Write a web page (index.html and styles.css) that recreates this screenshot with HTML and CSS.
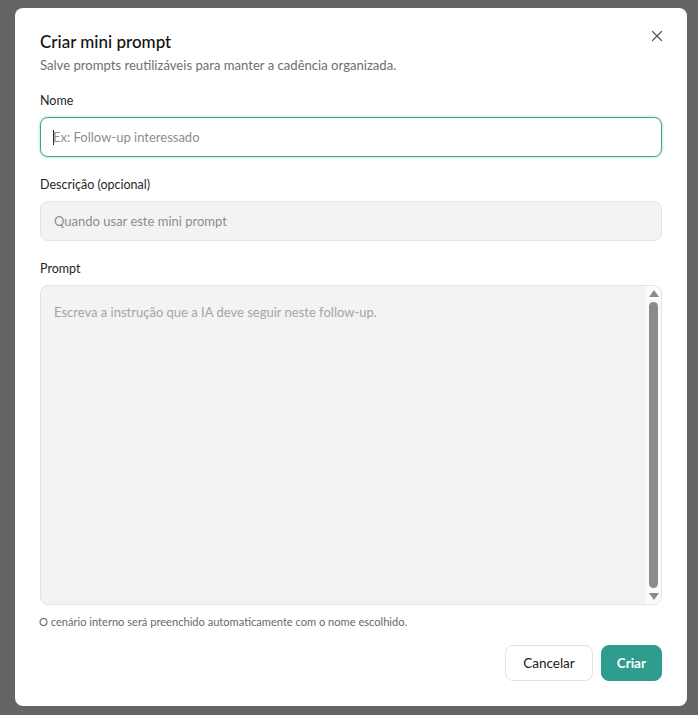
FILE: index.html
```html
<!DOCTYPE html>
<html lang="pt-BR">
<head>
<meta charset="utf-8">
<link rel="stylesheet" href="styles.css">
</head>
<body>
<div class="overlay">
  <div class="modal">
    <button class="close" aria-label="Fechar">
      <svg width="12" height="12" viewBox="0 0 12 12"><path d="M1.5 1.5L10.5 10.5M10.5 1.5L1.5 10.5" stroke="#555" stroke-width="1.2" fill="none" stroke-linecap="round"/></svg>
    </button>
    <h2 class="title">Criar mini prompt</h2>
    <p class="subtitle">Salve prompts reutilizáveis para manter a cadência organizada.</p>

    <div class="field">
      <label class="label">Nome</label>
      <div class="input focused"><span class="caret"></span><span class="ph">Ex: Follow-up interessado</span></div>
    </div>
    <div class="field">
      <label class="label">Descrição (opcional)</label>
      <div class="input"><span class="ph">Quando usar este mini prompt</span></div>
    </div>
    <div class="field">
      <label class="label">Prompt</label>
      <div class="textarea">
        <div class="ta-inner"><span class="ph">Escreva a instrução que a IA deve seguir neste follow-up.</span></div>
        <div class="scrollbar" aria-hidden="true">
          <span class="arrow up"></span>
          <span class="thumb"></span>
          <span class="arrow down"></span>
        </div>
      </div>
    </div>
    <p class="hint">O cenário interno será preenchido automaticamente com o nome escolhido.</p>

    <div class="actions">
      <button class="btn secondary">Cancelar</button>
      <button class="btn primary">Criar</button>
    </div>
  </div>
</div>
</body>
</html>
```
FILE: styles.css
```css
* { box-sizing: border-box; }
html, body { margin: 0; padding: 0; height: 100%; }
body {
  background: #656565;
  font-family: "Lato", "Liberation Sans", sans-serif;
  color: #1a1a1a;
}
.overlay {
  padding: 8px 11px 9px 15px;
  height: 715px;
}
.modal {
  position: relative;
  background: #fff;
  border-radius: 8px;
  height: 698px;
  padding: 23px 25px 25px 25px;
  display: flex;
  flex-direction: column;
}
.close {
  position: absolute;
  top: 20px;
  right: 22px;
  width: 16px;
  height: 16px;
  border: 0;
  background: none;
  padding: 2px;
  display: flex;
}
.title {
  margin: 0;
  font-size: 17px;
  font-weight: 500;
  line-height: 22px;
  color: #111;
}
.subtitle {
  margin: 3px 0 0 0;
  font-size: 13.1px;
  line-height: 18px;
  color: #6f6f6f;
}
.field { margin-top: 19px; display: flex; flex-direction: column; }
.field + .field { margin-top: 20px; }
.label {
  font-size: 12.5px;
  line-height: 16px;
  color: #1f1f1f;
  margin-bottom: 8px;
}
.input {
  height: 40px;
  border: 1px solid #e4e4e4;
  background: #f3f3f3;
  border-radius: 8px;
  display: flex;
  align-items: center;
  padding: 0 13px;
  font-size: 13px;
}
.input.focused {
  background: #fff;
  border: 1.5px solid #3aa597;
  box-shadow: 0 0 0 1.5px rgba(58,165,151,0.18);
  padding-left: 12px;
}
.caret {
  width: 1px; height: 15px; background: #222; margin-right: -1px;
}
.ph { color: #8d8d8d; font-size: 13px; }
.textarea {
  height: 320px;
  border: 1px solid #e4e4e4;
  background: #f3f3f3;
  border-radius: 8px;
  display: flex;
  overflow: hidden;
  font-size: 13px;
}
.ta-inner {
  flex: 1;
  padding: 18px 13px;
}
.ta-inner .ph { color: #a5a5a5; }
.scrollbar {
  width: 15px;
  background: #fbfbfb;
  display: flex;
  flex-direction: column;
  align-items: center;
  padding: 4px 0 4px;
}
.arrow {
  width: 0;
  height: 0;
  border-left: 5px solid transparent;
  border-right: 5px solid transparent;
}
.arrow.up { border-bottom: 7px solid #8b8b8b; margin-bottom: 5px; }
.arrow.down { border-top: 7px solid #8b8b8b; margin-top: 5px; }
.thumb {
  flex: 1;
  width: 9px;
  background: #8b8b8b;
  border-radius: 4.5px;
}
.hint {
  margin: 10px 0 0 0;
  font-size: 11.1px;
  line-height: 14px;
  color: #6a6a6a;
  margin-left: -1px;
}
.actions {
  margin-top: auto;
  display: flex;
  justify-content: flex-end;
  gap: 8px;
}
.btn {
  height: 36px;
  border-radius: 8px;
  font-family: inherit;
  font-size: 13.5px;
  padding: 0 16px;
}
.btn.secondary {
  background: #fff;
  border: 1px solid #e2e2e2;
  color: #1a1a1a;
  padding: 0 17px;
}
.btn.primary {
  background: #2e9d8d;
  border: 1px solid #2e9d8d;
  color: #fff;
  font-weight: 700;
  padding: 0 15px;
}
```
